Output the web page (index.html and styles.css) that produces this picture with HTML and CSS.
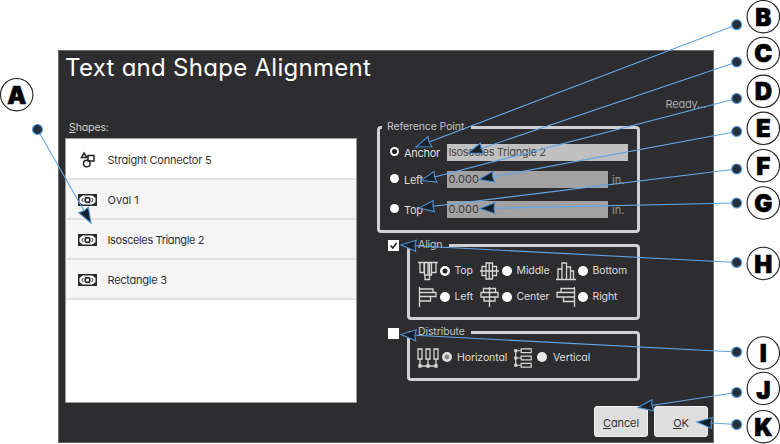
FILE: index.html
```html
<!DOCTYPE html>
<html lang="en">
<head>
<meta charset="utf-8">
<title>Text and Shape Alignment</title>
<link rel="stylesheet" href="styles.css">
</head>
<body>
<svg class="defs" width="0" height="0">
  <symbol id="money" viewBox="0 0 19 12">
    <rect width="19" height="12" fill="#26282a"/>
    <path d="M4.500 1.500h10l3 2.500v4l-3 2.500h-10L1.500 8V4z" fill="#fff"/>
    <path d="M5.500 4 3.800 6l1.700 2M13.500 4l1.700 2-1.700 2" fill="none" stroke="#333" stroke-width="1"/>
    <circle cx="9.500" cy="6" r="2.400" fill="#fff" stroke="#26282a" stroke-width="1.600"/>
    <path d="M7 2.500 8 4M12 9.500 11 8" stroke="#26282a"/>
  </symbol>
  <symbol id="a-top" viewBox="0 0 20 20"><path d="M0 1.500h20M2 2v9.500h4V2M6.500 2v12h3.500V2M7 14v4.500h4.500V2M11.500 14h2V2M14 11.500h4V2"/></symbol>
  <symbol id="a-left" viewBox="0 0 20 20"><path d="M1.500 0v20M2 2h13v3.500H2M2 5.500h16v4H2M2 9.500h10.500v4.500H2"/></symbol>
  <symbol id="a-middle" viewBox="0 0 20 20"><path d="M0 10h19M2 5.500h4v9H2zM6 2h6.500v16H6zM9.200 2v16M12.500 5.500h4v9h-4z"/></symbol>
  <symbol id="a-bottom" viewBox="0 0 20 20"><path d="M0 18.500h20M2 18v-10h4v10M6 18V2h4.500v16M10.500 18V6h4v12M14.500 18v-8h3v8"/></symbol>
</svg>

<main class="dialog">
  <h1 class="title">Text and Shape Alignment</h1>
  <div class="columns">
    <section class="shapes">
      <div class="shapes-label"><u>S</u>hapes:</div>
      <ul class="list">
        <li class="item first">
          <svg class="item-icon" width="20" height="18" viewBox="0 0 20 18" fill="none" stroke="#222" stroke-width="1.500"><path d="M6 2 3.500 6.500h5.300zM10 4.500h6v5.500h-6z"/><circle cx="8.800" cy="12.500" r="3.300"/></svg>
          <span class="w-straight">Straight Connector 5</span></li>
        <li class="item"><svg class="item-icon" width="19" height="12"><use href="#money"/></svg><span>Oval 1</span></li>
        <li class="item"><svg class="item-icon" width="19" height="12"><use href="#money"/></svg><span class="w-iso">Isosceles Triangle 2</span></li>
        <li class="item"><svg class="item-icon" width="19" height="12"><use href="#money"/></svg><span class="w-rect">Rectangle 3</span></li>
      </ul>
    </section>

    <section class="settings">
      <div class="status">Ready...</div>
      <div class="box reference">
        <div class="legend">Reference Point</div>
        <div class="field anchor"><i class="radio on"></i><span class="field-label">Anchor</span><span class="input wide">Isosceles Triangle 2</span></div>
        <div class="field left"><i class="radio"></i><span class="field-label">Left</span><span class="input">0.000</span><span class="unit">in.</span></div>
        <div class="field"><i class="radio"></i><span class="field-label">Top</span><span class="input">0.000</span><span class="unit">in.</span></div>
      </div>

      <div class="group">
        <span class="check"><svg width="11" height="11" viewBox="0 0 11 11"><path d="M2.500 5.500 4.800 8 8.700 3" fill="none" stroke="#222" stroke-width="1.600"/></svg></span>
        <div class="box align">
          <div class="legend">Align</div>
          <div class="options">
            <svg class="icon"><use href="#a-top"/></svg><i class="radio on"></i><span>Top</span>
            <svg class="icon"><use href="#a-middle"/></svg><i class="radio"></i><span>Middle</span>
            <svg class="icon"><use href="#a-bottom"/></svg><i class="radio"></i><span>Bottom</span>
            <svg class="icon"><use href="#a-left"/></svg><i class="radio"></i><span>Left</span>
            <svg class="icon" viewBox="0 0 20 20"><path d="M9.500 0v20M3.500 1.500h12v4h-12zM1 5.500h17v4.500H1zM4 10h11v4H4z"/></svg><i class="radio"></i><span>Center</span>
            <svg class="icon" viewBox="0 0 20 20"><path d="M18.500 0v20M18 1.500H5v4h13M18 5.500H1v4.500h17M18 10H7.500v4.500H18"/></svg><i class="radio"></i><span>Right</span>
          </div>
        </div>
      </div>

      <div class="group second">
        <span class="check"></span>
        <div class="box distribute">
          <div class="legend">Distribute</div>
          <div class="options">
            <svg class="icon" viewBox="0 0 22 20"><path d="M1 1h4v10H1zM9 1h4v10H9zM17 1h4v10h-4zM3 11v7h16v-7M11 11v7"/><path class="nodes" d="M2 17h2v2H2zM10 17h2v2h-2zM18 17h2v2h-2z"/></svg><i class="radio dim"></i><span>Horizontal</span>
            <svg class="icon" viewBox="0 0 20 22"><path d="M8 1h11v4H8zM8 9h11v4H8zM8 17h11v4H8zM8 3H2v16h6M2 11h6"/><path class="nodes" d="M1 2h2v2H1zM1 10h2v2H1zM1 18h2v2H1z"/></svg><i class="radio pale"></i><span>Vertical</span>
          </div>
        </div>
      </div>
    </section>
  </div>
  <footer class="buttons">
    <button class="button"><span><u>C</u>ancel</span></button>
    <button class="button"><span><u>O</u>K</span></button>
  </footer>
</main>

<svg class="callouts" width="780" height="444" viewBox="0 0 780 444">
  <defs>
    <marker id="head" markerUnits="userSpaceOnUse" markerWidth="20" markerHeight="16" refX="17" refY="7" orient="auto">
      <path d="M17 7 2 1.500 3 7 2 12.500z" fill="#17212b" stroke="#4d8fd0" stroke-width="1.100"/>
    </marker>
  </defs>
  <g class="lines">
    <path d="M37.500 129.500 91 223"/><path d="M736.700 24.700 416 147"/><path d="M736.700 62 468 153"/>
    <path d="M736.700 98.500 421 180.500"/><path d="M736.700 131.500 479 179.500"/><path d="M736.700 169 419 208"/>
    <path d="M736.700 203 480 208.500"/><path d="M736.700 262.500 401 245"/><path d="M736.700 352 401 334.500"/>
    <path d="M736.700 392.500 638 407.500"/><path d="M736.700 424.500 697 422"/>
  </g>
  <g class="dots">
    <circle cx="37.500" cy="129.500" r="5"/><circle cx="736.700" cy="24.700" r="5"/><circle cx="736.700" cy="62" r="5"/>
    <circle cx="736.700" cy="98.500" r="5"/><circle cx="736.700" cy="131.500" r="5"/><circle cx="736.700" cy="169" r="5"/>
    <circle cx="736.700" cy="203" r="5"/><circle cx="736.700" cy="262.500" r="5"/><circle cx="736.700" cy="352" r="5"/>
    <circle cx="736.700" cy="392.500" r="5"/><circle cx="736.700" cy="424.500" r="5"/>
  </g>
  <g class="rings">
    <circle cx="16.700" cy="94.700" r="16.200"/><circle cx="763.300" cy="16.700" r="16.200"/><circle cx="763.300" cy="53.500" r="16.200"/>
    <circle cx="763.300" cy="91.300" r="16.200"/><circle cx="763.300" cy="128.300" r="16.200"/><circle cx="763.300" cy="165.700" r="16.200"/>
    <circle cx="763.300" cy="203" r="16.200"/><circle cx="763.300" cy="263.500" r="16.200"/><circle cx="763.300" cy="353" r="16.200"/>
    <circle cx="763.300" cy="388.500" r="16.200"/><circle cx="763.300" cy="426.700" r="16.200"/>
  </g>
  <g class="letters">
    <text x="16.700" y="103.500">A</text><text x="763.300" y="26">B</text><text x="763.300" y="62">C</text>
    <text x="763.300" y="100">D</text><text x="763.300" y="137">E</text><text x="763.300" y="174.500">F</text>
    <text x="763.300" y="211.700">G</text><text x="763.300" y="272.500">H</text><text x="763.300" y="362">I</text>
    <text x="763.300" y="398.500">J</text><text x="763.300" y="435.500">K</text>
  </g>
</svg>
</body>
</html>
```
FILE: styles.css
```css
* { box-sizing: border-box; }

body {
  margin: 0;
  width: 780px;
  height: 444px;
  overflow: hidden;
  position: relative;
  background: #fff;
  font: 11px/16px Inter, "Open Sans", sans-serif;
  font-feature-settings: "cv11";
}

.defs { display: block; }

.dialog {
  width: 656px;
  height: 393px;
  margin: 50px 0 0 58px;
  padding: 0 5px 0 7px;
  background: #2d2d2f;
  border: 1px solid #69696b;
  color: #ddd;
}

.title {
  margin: 0 0 0 -1px;
  height: 45px;
  color: #fff;
  font-size: 24px;
  font-weight: 400;
  line-height: 34px;
  letter-spacing: 0.28px;
}

.columns { display: flex; height: 310px; }

.shapes { width: 292px; margin-left: -1px; padding-top: 24px; }

.shapes-label {
  padding-left: 4px;
  height: 18px;
  font-size: 10.500px;
  color: #d0d0d0;
  letter-spacing: -0.1px;
}

.list {
  list-style: none;
  margin: 0;
  padding: 0;
  height: 265px;
  background: #fff;
  border: 1px solid #999;
  color: #333;
}

.item {
  display: flex;
  align-items: center;
  height: 40px;
  padding-top: 2px;
  background: #f5f5f5;
  border-bottom: 2px solid #e2e2e2;
}

.item.first { height: 41px; background: #fff; }
.item-icon { width: 19px; margin: 0 10.500px 0 12px; }
.item.first .item-icon { width: 20px; margin-right: 9.500px; }
.w-straight { letter-spacing: -0.22px; }
.w-iso { letter-spacing: -0.38px; }
.w-rect { letter-spacing: -0.25px; }

.settings { width: 331px; margin-left: 20px; }

.status { text-align: right; padding-right: 2px; height: 30px; color: #aaa; letter-spacing: -0.2px; }

.box { border: 3px solid #d0d0d2; border-radius: 4px; }

.legend {
  width: max-content;
  height: 16px;
  margin-top: -10px;
  background: #2d2d2f;
  font-size: 10.500px;
  color: #c4c4c4;
  letter-spacing: -0.1px;
}

.reference { width: 263px; height: 107px; }
.reference .legend { margin-left: 2px; padding: 0 7px 0 5px; }

.field { display: flex; align-items: center; height: 17px; padding-left: 10px; }
.field.anchor { margin-top: 9px; }
.field.left { margin: 10px 0 13px; }
.field-label { width: 42.500px; margin-left: 5px; letter-spacing: -0.3px; }
.field .radio { margin-top: -2px; }

.radio {
  width: 10px;
  height: 10px;
  border-radius: 50%;
  background: #fff;
  flex: none;
}
.field .radio { width: 9px; height: 9px; }
.radio.on { border: 2.500px solid #fff; background: #222; }
.radio.on { border: 0; background: radial-gradient(circle, #222 2.100px, #fff 2.900px); }
.radio.dim { background: radial-gradient(circle, #888 1.800px, #ddd 2.900px); }
.radio.pale { background: #e8e8e8; }

.input {
  width: 161.500px;
  height: 17px;
  padding-left: 2px;
  background: #a2a2a2;
  color: #3a3a3a;
}
.input.wide { width: 181px; background: #c0c0c0; color: #4a4a4a; letter-spacing: -0.35px; }
.unit { margin-left: 4px; color: #999; }

.group { display: flex; margin-top: 11px; padding-left: 11px; }

.check { width: 11px; height: 11px; margin: -4px 8px 0 0; background: #fff; flex: none; line-height: 0; }
.second .check { margin-top: -3px; }

.align { width: 233px; height: 76px; }
.align .legend { margin-left: 3px; padding: 0 7px 0 5px; }
.distribute { width: 233px; height: 50px; }
.distribute .legend { margin-left: 2px; padding: 0 6px 0 6px; }

.options { display: grid; align-items: center; font-size: 10.500px; letter-spacing: -0.1px; }
.align .options {
  grid-template-columns: 20px 13px 29px 20px 13px 43px 20px 13px 1fr;
  grid-template-rows: 20px 20px;
  row-gap: 6px;
  margin: 8px 0 0 8px;
}
.distribute .options {
  grid-template-columns: 22px 16px 58px 20px 18px 1fr;
  margin: 7.500px 0 0 7px;
}
.options .radio { justify-self: center; margin-top: -1px; }
.align .options span { padding-left: 3.500px; }
.distribute .options span { padding-left: 2px; }

.icon { width: 20px; height: 20px; fill: none; stroke: #d8d8d8; stroke-width: 1.300; }
.distribute .icon { width: 100%; }
.nodes { fill: #ddd; }

.buttons { display: flex; justify-content: flex-end; gap: 6px; }

.button {
  width: 54px;
  height: 31px;
  padding: 2px 0 0;
  border: 1px solid #f0f0f0;
  border-radius: 3px;
  background: #dedede;
  color: #333;
  font: inherit;
  font-feature-settings: inherit;
  letter-spacing: -0.1px;
}

.callouts { position: absolute; left: 0; top: 0; }
.lines path { fill: none; stroke: #62a5e5; stroke-width: 1.100; marker-end: url(#head); }
.dots circle { fill: #262e38; stroke: #5b9de0; stroke-width: 1.200; }
.rings circle { fill: #fff; stroke: #222; stroke-width: 1.100; }
.letters text { font: 900 24px Inter, sans-serif; text-anchor: middle; stroke: #000; stroke-width: 0.600; }
```
